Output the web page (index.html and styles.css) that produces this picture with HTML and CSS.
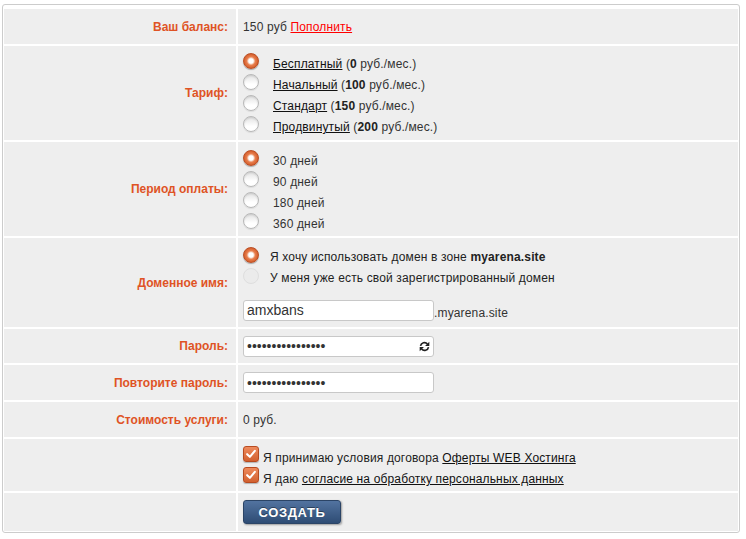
FILE: index.html
```html
<!DOCTYPE html>
<html lang="ru">
<head>
<meta charset="utf-8">
<title>Заказ хостинга</title>
<link rel="stylesheet" href="styles.css">
</head>
<body>
<div class="box">
<table class="form">
<colgroup><col class="c1"><col class="c2"></colgroup>
<tr class="r-balance">
  <td class="lbl">Ваш баланс:</td>
  <td class="val">150 руб <a class="red" href="#">Пополнить</a></td>
</tr>
<tr class="r-tariff">
  <td class="lbl">Тариф:</td>
  <td class="val"><div class="opts">
    <div class="opt"><span class="radio on"></span><span class="otext"><a href="#">Бесплатный</a> (<b>0</b> руб./мес.)</span></div>
    <div class="opt"><span class="radio"></span><span class="otext"><a href="#">Начальный</a> (<b>100</b> руб./мес.)</span></div>
    <div class="opt"><span class="radio"></span><span class="otext"><a href="#">Стандарт</a> (<b>150</b> руб./мес.)</span></div>
    <div class="opt"><span class="radio"></span><span class="otext"><a href="#">Продвинутый</a> (<b>200</b> руб./мес.)</span></div>
  </div></td>
</tr>
<tr class="r-period">
  <td class="lbl">Период оплаты:</td>
  <td class="val"><div class="opts">
    <div class="opt"><span class="radio on"></span><span class="otext">30 дней</span></div>
    <div class="opt"><span class="radio"></span><span class="otext">90 дней</span></div>
    <div class="opt"><span class="radio"></span><span class="otext">180 дней</span></div>
    <div class="opt"><span class="radio"></span><span class="otext">360 дней</span></div>
  </div></td>
</tr>
<tr class="r-domain">
  <td class="lbl">Доменное имя:</td>
  <td class="val">
    <div class="opts">
      <div class="opt"><span class="radio on"></span><span class="otext dtext">Я хочу использовать домен в зоне <b>myarena.site</b></span></div>
      <div class="opt"><span class="radio off"></span><span class="otext dtext">У меня уже есть свой зарегистрированный домен</span></div>
    </div>
    <div class="domain-line"><input class="field" type="text" value="amxbans"><span class="suffix">.myarena.site</span></div>
  </td>
</tr>
<tr class="r-pass">
  <td class="lbl">Пароль:</td>
  <td class="val"><span class="pw-wrap"><input class="field" type="password" value="aaaaaaaaaaaaaaaa"><svg class="refresh" viewBox="0 0 16 16" width="11" height="11"><path d="M2.2 7.2 A5.8 5.8 0 0 1 12.3 4.3" fill="none" stroke="#222" stroke-width="2.4"/><polygon points="15,1 15,7.2 8.8,7.2" fill="#222"/><path d="M13.8 8.8 A5.8 5.8 0 0 1 3.7 11.7" fill="none" stroke="#222" stroke-width="2.4"/><polygon points="1,15 1,8.8 7.2,8.8" fill="#222"/></svg></span></td>
</tr>
<tr class="r-pass2">
  <td class="lbl">Повторите пароль:</td>
  <td class="val"><input class="field" type="password" value="aaaaaaaaaaaaaaaa"></td>
</tr>
<tr class="r-cost">
  <td class="lbl">Стоимость услуги:</td>
  <td class="val">0 руб.</td>
</tr>
<tr class="r-agree">
  <td class="lbl"></td>
  <td class="val"><div class="opts">
    <div class="opt"><span class="cb"><svg viewBox="0 0 16 16" width="14" height="14"><path d="M3.6 8.2 L6.7 11.2 L12.4 4.4" fill="none" stroke="#fff" stroke-width="2.4" stroke-linecap="round" stroke-linejoin="round"/></svg></span><span class="otext ctext">Я принимаю условия договора <a href="#">Оферты WEB Хостинга</a></span></div>
    <div class="opt"><span class="cb"><svg viewBox="0 0 16 16" width="14" height="14"><path d="M3.6 8.2 L6.7 11.2 L12.4 4.4" fill="none" stroke="#fff" stroke-width="2.4" stroke-linecap="round" stroke-linejoin="round"/></svg></span><span class="otext ctext">Я даю <a href="#">согласие на обработку персональных данных</a></span></div>
  </div></td>
</tr>
<tr class="r-submit">
  <td class="lbl"></td>
  <td class="val"><button class="btn" type="button">СОЗДАТЬ</button></td>
</tr>
</table>
</div>
</body>
</html>
```
FILE: styles.css
```css
* { box-sizing: border-box; }
body {
  margin: 0;
  background: #fff;
  font-family: "Liberation Sans", Arial, sans-serif;
  font-size: 12px;
  color: #333;
}
.box {
  margin: 4px 0 0 2px;
  width: 738px;
  border: 1px solid #ccc;
  border-radius: 3px;
}
.form {
  border-collapse: separate;
  border-spacing: 2px;
  margin: 2px -1px -1px -1px;
  width: 738px;
  table-layout: fixed;
}
col.c1 { width: 232px; }
col.c2 { width: 500px; }
.form td {
  background: #eee;
  padding: 0 5px;
  vertical-align: middle;
  line-height: 14px;
}
.form td.val { letter-spacing: 0.15px; }
.form td.lbl {
  text-align: right;
  padding-right: 8px;
  color: #df5325;
  font-weight: bold;
}
.r-balance td { height: 35px; }
.r-tariff td { height: 94px; }
.r-period td { height: 94px; }
.r-domain td { height: 89px; }
.r-pass td { height: 34px; }
.r-pass2 td { height: 35px; }
.r-cost td { height: 35px; }
.r-agree td { height: 52px; }
.r-submit td { height: 38px; }

a { color: #111; text-decoration: underline; }
a.red { color: #f00; }
b { color: #222; }

.r-period .opts { margin-top: 2px; }
.opt {
  display: flex;
  align-items: flex-start;
  height: 21px;
}
.otext { margin-top: 6px; margin-left: 14px; white-space: nowrap; }
.otext.dtext { margin-top: 5px; margin-left: 11px; color: #222; }
.otext.ctext { margin-top: 7px; margin-left: 4px; color: #222; }

.radio {
  flex: none;
  width: 16px;
  height: 16px;
  margin-top: 2px;
  border-radius: 50%;
  border: 1px solid #b8b8b8;
  background: linear-gradient(#e2e2e2, #fff 65%);
  box-shadow: inset 0 1px 2px rgba(0,0,0,0.12), 0 1px 1px rgba(0,0,0,0.08);
}
.radio.on {
  border-color: #bb4f25;
  background: radial-gradient(circle, #fff 0, #fff 2.2px, #f4d3c1 3px, #e98050 4.2px, #d55f2c 7px);
  box-shadow: 0 1px 1px rgba(0,0,0,0.3);
}
.radio.off {
  border-color: #dedede;
  background: #ebebeb;
  box-shadow: none;
}

.cb {
  flex: none;
  width: 16px;
  height: 16px;
  margin-top: 2px;
  border-radius: 3px;
  border: 1px solid #b84b20;
  background: linear-gradient(#ee8a5c, #d2602f);
  box-shadow: 0 1px 1px rgba(0,0,0,0.25);
  display: flex;
  align-items: center;
  justify-content: center;
}

.domain-line {
  display: flex;
  align-items: flex-end;
  margin-top: 13px;
}
.suffix { margin-bottom: 1px; color: #333; }

.field {
  display: block;
  width: 191px;
  height: 21px;
  margin: 0;
  padding: 0 3px;
  border: 1px solid #c8c8c8;
  border-radius: 3px;
  background: #fff;
  font-family: "Liberation Sans", Arial, sans-serif;
  font-size: 14px;
  color: #333;
  outline: none;
}
.pw-wrap {
  position: relative;
  display: block;
  width: 191px;
}
.refresh {
  position: absolute;
  right: 4px;
  top: 5px;
}

.btn {
  display: block;
  width: 98px;
  height: 24px;
  margin: 0;
  padding: 0;
  border: 1px solid #2b4466;
  border-radius: 3px;
  background: linear-gradient(#5273a0, #2e4c74);
  box-shadow: 1px 1px 2px rgba(0,0,0,0.35);
  color: #fff;
  font-family: "Liberation Sans", Arial, sans-serif;
  font-size: 13px;
  font-weight: bold;
  letter-spacing: 0.6px;
  text-shadow: 0 -1px 0 rgba(0,0,0,0.4);
}
```
